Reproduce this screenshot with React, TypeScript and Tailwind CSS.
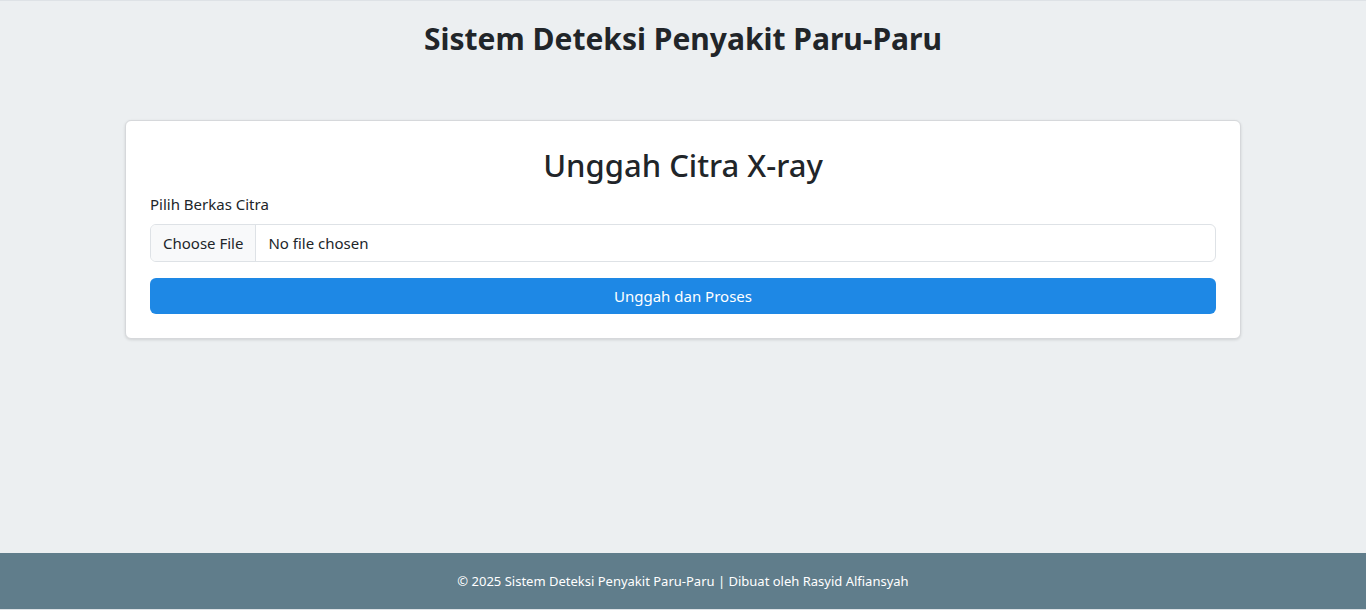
export default function App() {
  return (
    <div
      className="flex min-h-[610px] flex-col border-t border-[#dee2e6] bg-[#eceff1] text-[#212529]"
      style={{ fontFamily: '"Noto Sans", "Open Sans", sans-serif' }}
    >
      <header className="pt-[19px] text-center">
        <h1 className="text-[30px] font-bold leading-[38px]">Sistem Deteksi Penyakit Paru-Paru</h1>
      </header>

      <main className="mx-auto mt-[62px] w-[1116px] flex-1">
        <div className="rounded-md border border-[#d6d8db] bg-white px-6 pb-6 pt-[25px] shadow-[0_1px_3px_rgba(0,0,0,0.12)]">
          <h2 className="mb-2 text-center text-[31px] font-medium leading-[38px]">Unggah Citra X-ray</h2>
          <label className="mb-2 block text-[15px] leading-6">Pilih Berkas Citra</label>
          <div className="mb-4 flex h-[38px] items-stretch overflow-hidden rounded-md border border-[#dee2e6] text-[15px]">
            <span className="flex items-center border-r border-[#dee2e6] bg-[#f8f9fa] px-3">Choose File</span>
            <span className="flex items-center px-3">No file chosen</span>
          </div>
          <button className="flex h-9 w-full items-center justify-center rounded-md bg-[#1e88e5] text-[15px] text-white">
            Unggah dan Proses
          </button>
        </div>
      </main>

      <footer className="flex h-[57px] items-center justify-center border-b border-[#dee2e6] bg-[#607d8b] pt-[2px] text-[13px] text-white">
        © 2025 Sistem Deteksi Penyakit Paru-Paru | Dibuat oleh Rasyid Alfiansyah
      </footer>
    </div>
  );
}
